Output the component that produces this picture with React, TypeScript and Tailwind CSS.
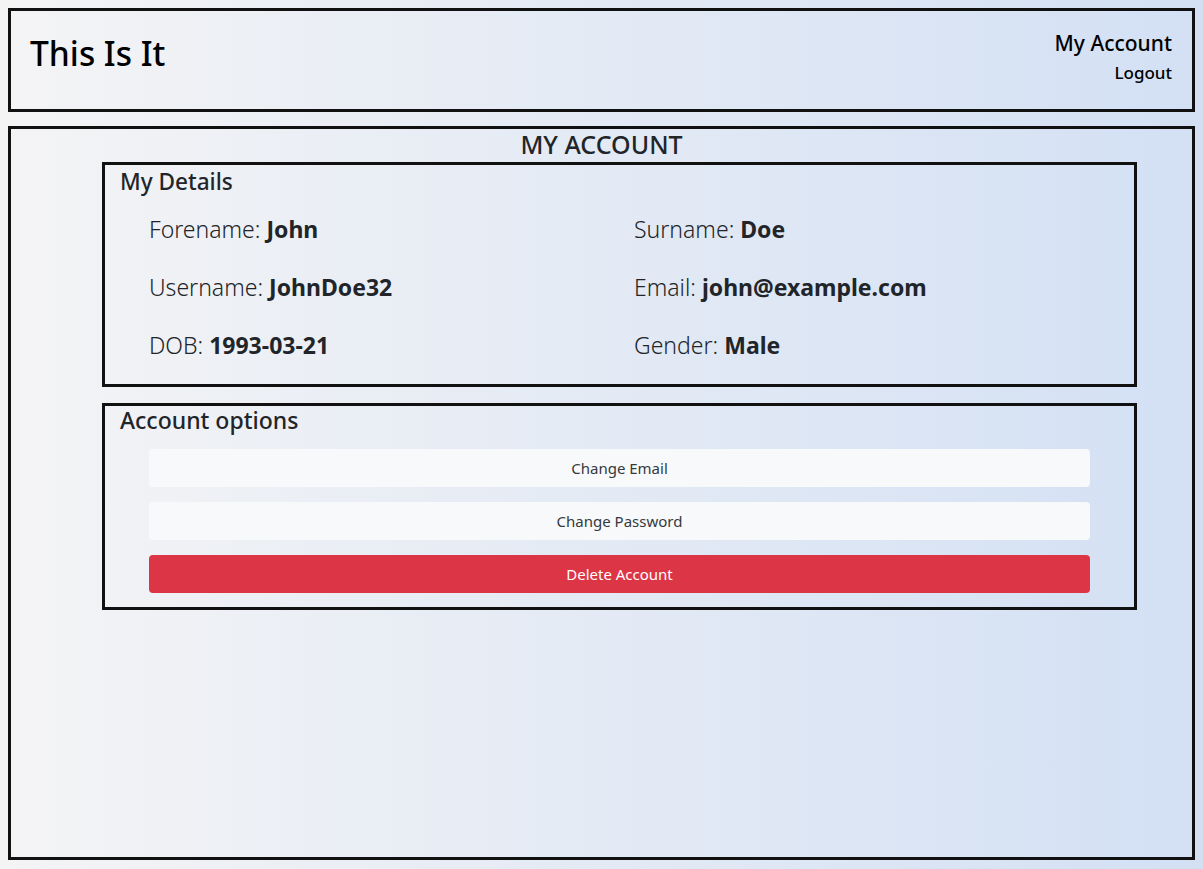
import React from "react";

const details: [string, string][] = [
  ["Forename", "John"],
  ["Surname", "Doe"],
  ["Username", "JohnDoe32"],
  ["Email", "john@example.com"],
  ["DOB", "1993-03-21"],
  ["Gender", "Male"],
];

export default function App() {
  return (
    <div
      className="h-[869px] w-full overflow-hidden bg-gradient-to-r from-[#f4f4f5] to-[#d3e0f4] px-2 pt-2 text-[#212529]"
      style={{ fontFamily: '"Noto Sans", "Open Sans", sans-serif' }}
    >
      {/* header */}
      <header className="flex h-[104px] items-start justify-between border-[3px] border-[#111] pl-[19px] pr-5">
        <h1 className="mt-[20px] text-[33.5px] font-medium leading-[44px] text-black">This Is It</h1>
        <div className="mt-[17px] flex flex-col items-end">
          <a className="text-[21px] font-medium leading-[30px] text-black">My Account</a>
          <a className="mt-[4px] text-[17px] font-medium leading-[22px] text-black">Logout</a>
        </div>
      </header>

      {/* main */}
      <main className="mt-[14px] h-[734px] border-[3px] border-[#111]">
        <h2 className="text-center text-[25px] font-medium leading-[30px]">MY ACCOUNT</h2>
        <div className="ml-[91px] mr-[55px] mt-[3px] flex flex-col gap-4">
          <section className="h-[225px] border-[3px] border-[#111] px-[15px]">
            <h3 className="pt-[1px] text-[22.6px] font-medium leading-[32px]">My Details</h3>
            <div className="mt-[15px] grid grid-cols-[485px_1fr] gap-y-[26px] pl-[29px]">
              {details.map(([label, value]) => (
                <p key={label} className="text-[23px] font-light leading-[32px]">
                  {label}: <span className="font-bold">{value}</span>
                </p>
              ))}
            </div>
          </section>

          <section className="h-[207px] border-[3px] border-[#111] px-[15px]">
            <h3 className="-mt-[2px] text-[23px] font-medium leading-[32px]">Account options</h3>
            <div className="mt-[13px] flex flex-col gap-[15px] px-[29px]">
              <button className="h-[38px] rounded bg-[#f8f9fa] text-[15px] text-[#343a40]">Change Email</button>
              <button className="h-[38px] rounded bg-[#f8f9fa] text-[15px] text-[#343a40]">Change Password</button>
              <button className="h-[38px] rounded bg-[#dc3545] text-[15px] text-white">Delete Account</button>
            </div>
          </section>
        </div>
      </main>
    </div>
  );
}
